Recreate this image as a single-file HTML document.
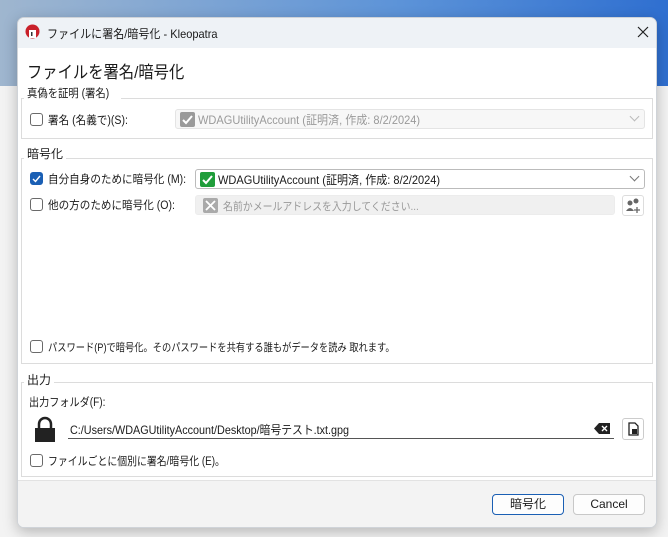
<!DOCTYPE html>
<html><head><meta charset="utf-8"><style>
*{box-sizing:border-box;margin:0;padding:0}
body{width:668px;height:537px;overflow:hidden;position:relative;font-family:"Liberation Sans","Noto Sans CJK JP",sans-serif;font-size:12px;color:#1a1a1a;background:#eeeeee}
.bgtop{position:absolute;left:0;top:0;width:668px;height:86px;background:linear-gradient(90deg,#9fb6cf,#5c93d8 60%,#2f6fd0)}
.bgapp{position:absolute;left:0;top:86px;width:668px;height:451px;background:#f3f3f3}
.dlg{position:absolute;left:17px;top:17px;width:640px;height:511px;background:#fff;border:1px solid #cfd3d8;border-radius:7px;overflow:hidden;box-shadow:0 4px 14px rgba(0,0,0,.25)}
.title{position:absolute;left:0;top:0;width:640px;height:30px;background:#eef2f6}
.abs{position:absolute;white-space:nowrap;transform-origin:0 50%}
.grp{position:absolute;border:1px solid #dcdcdc;left:3px;width:632px}
.lbl{position:absolute;background:#fff;padding:0 3px;font-size:12px}
.cb{position:absolute;width:13px;height:13px;border:1px solid #6a6a6a;border-radius:3px;background:#fff}
.cbx{background:#1a5fb4;border-color:#1a5fb4}
.combo{position:absolute;height:20px;border:1px solid #d0d0d0;border-radius:3px;background:#fff}
.chev{position:absolute;right:6px;top:3px;width:7px;height:7px;border-right:1px solid #777;border-bottom:1px solid #777;transform:rotate(45deg)}
.btn{position:absolute;height:21px;border:1px solid #c8c8c8;border-radius:4px;background:#fdfdfd;text-align:center;line-height:19px}
.t{font-size:11.5px;transform:scaleX(.92)}
</style></head><body>
<div class="bgtop"></div><div class="bgapp"></div>
<div class="dlg">
 <div class="title"></div>
 <svg class="abs" style="left:7px;top:6px" width="15" height="15" viewBox="0 0 15 15"><circle cx="7.5" cy="7.5" r="7" fill="#c9202a"/><rect x="4" y="6" width="7" height="8" fill="#fff"/><rect x="6" y="8" width="1.5" height="4" fill="#333"/></svg>
 <div class="abs" style="left:29px;top:7px;font-size:12px;transform:scaleX(.92)">ファイルに署名/暗号化 - Kleopatra</div>
 <svg class="abs" style="left:618px;top:7px" width="14" height="14"><path d="M2 2L12 12M12 2L2 12" stroke="#222" stroke-width="1.2"/></svg>
 <div class="abs" style="left:9px;top:40px;font-size:17px;transform:scaleX(.9)">ファイルを署名/暗号化</div>

 <div class="grp" style="top:80px;height:41px"></div>
 <div class="lbl" style="left:6px;top:67px"><span style="display:inline-block;font-size:11.5px;transform:scaleX(.9);transform-origin:0 50%">真偽を証明 (署名)</span></div>
 <div class="cb" style="left:12px;top:95px"></div>
 <div class="abs t" style="left:30px;top:94px">署名 (名義で)(S):</div>
 <div class="combo" style="left:157px;top:91px;width:470px;background:#f7f7f7;border-color:#e4e4e4">
  <div class="abs" style="left:4px;top:2px;width:15px;height:15px;background:#9a9a9a;border-radius:2px"><svg width="15" height="15"><path d="M3 8l3 3 6-7" stroke="#fff" stroke-width="2" fill="none"/></svg></div>
  <div class="abs" style="left:22px;top:1px;color:#9a9a9a;transform:scaleX(.92)">WDAGUtilityAccount (証明済, 作成: 8/2/2024)</div>
  <div class="chev" style="border-color:#bbb"></div></div>

 <div class="grp" style="top:140px;height:206px"></div>
 <div class="lbl" style="left:6px;top:127px">暗号化</div>
 <div class="cb cbx" style="left:12px;top:154px"><svg width="11" height="11" style="position:absolute;left:0;top:0"><path d="M2 6l2.5 2.5L9 3" stroke="#fff" stroke-width="1.4" fill="none"/></svg></div>
 <div class="abs t" style="left:30px;top:153px">自分自身のために暗号化 (M):</div>
 <div class="combo" style="left:177px;top:151px;width:450px;border-color:#bbb">
  <div class="abs" style="left:4px;top:2px;width:15px;height:15px;background:#1f9d3a;border-radius:2px"><svg width="15" height="15"><path d="M3 8l3 3 6-7" stroke="#fff" stroke-width="2" fill="none"/></svg></div>
  <div class="abs" style="left:22px;top:1px;transform:scaleX(.92)">WDAGUtilityAccount (証明済, 作成: 8/2/2024)</div>
  <div class="chev"></div></div>
 <div class="cb" style="left:12px;top:180px"></div>
 <div class="abs t" style="left:30px;top:179px">他の方のために暗号化 (O):</div>
 <div class="combo" style="left:177px;top:177px;width:420px;background:#f0f0f0;border-color:#ececec">
  <div class="abs" style="left:7px;top:2px;width:15px;height:15px;background:#aaa;border-radius:2px"><svg width="15" height="15"><path d="M3 3l9 9M12 3l-9 9" stroke="#fff" stroke-width="1.8"/></svg></div>
  <div class="abs" style="left:27px;top:2px;color:#999;font-size:11px;transform:scaleX(.9)">名前かメールアドレスを入力してください...</div></div>
 <div class="abs" style="left:604px;top:177px;width:22px;height:21px;border:1px solid #ddd;border-radius:3px"><svg width="20" height="19"><circle cx="7" cy="7" r="2.5" fill="#666"/><circle cx="13" cy="5" r="2.5" fill="#666"/><path d="M3 15q4-6 8 0z" fill="#666"/><path d="M14 11v6M11 14h6" stroke="#666" stroke-width="1.3"/></svg></div>
 <div class="cb" style="left:12px;top:322px"></div>
 <div class="abs" style="left:30px;top:321px;font-size:11px;transform:scaleX(.84)">パスワード(P)で暗号化。そのパスワードを共有する誰もがデータを読み 取れます。</div>

 <div class="grp" style="top:364px;height:95px"></div>
 <div class="lbl" style="left:6px;top:353px">出力</div>
 <div class="abs" style="left:11px;top:376px;font-size:11.5px;transform:scaleX(.88)">出力フォルダ(F):</div>
 <svg class="abs" style="left:16px;top:398px" width="22" height="26"><path d="M5 12V8a6 6 0 0 1 12 0v4" stroke="#222" stroke-width="2.5" fill="none"/><rect x="1" y="12" width="20" height="14" fill="#222"/></svg>
 <div class="combo" style="left:50px;top:401px;width:546px;border:none;border-bottom:1px solid #555;border-radius:0">
  <div class="abs" style="left:2px;top:2px;transform:scaleX(.9)">C:/Users/WDAGUtilityAccount/Desktop/暗号テスト.txt.gpg</div>
  <svg class="abs" style="right:4px;top:4px" width="16" height="11"><path d="M5 0h11v11H5L0 5.5z" fill="#222"/><path d="M8 3l5 5M13 3l-5 5" stroke="#fff" stroke-width="1.4"/></svg></div>
 <div class="abs" style="left:604px;top:400px;width:22px;height:22px;border:1px solid #ccc;border-radius:3px"><svg width="20" height="20"><path d="M6 4h6l3 3v9H6z" fill="none" stroke="#222" stroke-width="1.3"/><rect x="9" y="10" width="5" height="5" fill="#222"/></svg></div>
 <div class="cb" style="left:12px;top:436px"></div>
 <div class="abs" style="left:30px;top:435px;font-size:11.5px;transform:scaleX(.86)">ファイルごとに個別に署名/暗号化 (E)。</div>

 <div class="abs" style="left:0;top:462px;width:640px;height:49px;background:#f3f3f3;border-top:1px solid #e2e2e2"></div>
 <div class="btn" style="left:474px;top:476px;width:72px;border:1px solid #1a5fb4">暗号化</div>
 <div class="btn" style="left:555px;top:476px;width:72px">Cancel</div>
</div>
</body></html>
